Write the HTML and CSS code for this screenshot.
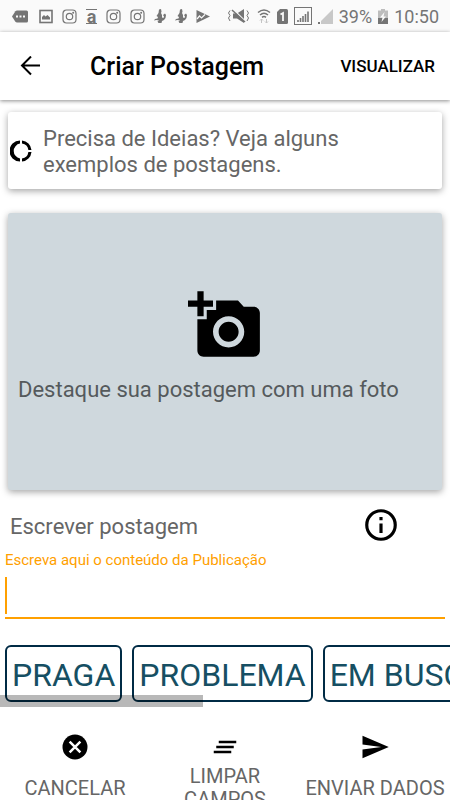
FILE: index.html
```html
<!DOCTYPE html>
<html lang="pt-BR">
<head>
<meta charset="utf-8">
<meta name="viewport" content="width=device-width, initial-scale=1">
<title>Criar Postagem</title>
<link rel="stylesheet" href="styles.css">
</head>
<body>
<svg class="defs" aria-hidden="true">
  <symbol id="camera-outline" viewBox="0 0 15 15">
    <rect x="1" y="1" width="13" height="13" rx="3.5" fill="none" stroke="currentColor" stroke-width="1.2"/>
    <circle cx="7.5" cy="7.5" r="3.2" fill="none" stroke="currentColor" stroke-width="1.2"/>
    <circle cx="11.2" cy="3.8" r="1" fill="currentColor"/>
  </symbol>
  <symbol id="figure" viewBox="0 0 12 15">
    <path fill="currentColor" d="M5 .5 7 0l.5 2.500L7 4l1 2v2.500l1.500.5.500-1.500L9 6l2-1.500L12 6l-.5 3-1.500 2-2 1-.5 2H4.500l-1-1.500L5 11.500 2.500 11 0 11.500 1 10l2.500-.5L4 8 2.500 7 4.500 4z"/>
  </symbol>
</svg>
<div class="app">
  <div class="status">
    <div class="status-icons">
      <svg width="18" height="15" viewBox="0 0 18 15"><path fill="currentColor" d="M5 1.500h9.500q1.500 0 1.500 1.500v9q0 1.500-1.500 1.500H5q-1 0-1.600-.8L0 7.500l3.400-5.200Q4 1.500 5 1.500z"/><path fill="#fafafa" d="M4 6.500h2v2H4zm3.500 0h2v2h-2zm3.500 0h2v2h-2z"/></svg>
      <svg width="14" height="15" viewBox="0 0 14 15"><rect x="1" y="1.500" width="12" height="12" fill="none" stroke="currentColor" stroke-width="1.600"/><path fill="currentColor" d="M3 10.500V8l2-2 1.500 1.500L8.500 6 11 8.500v2z"/></svg>
      <svg width="15" height="15"><use href="#camera-outline"/></svg>
      <span class="letter">a</span>
      <svg width="15" height="15"><use href="#camera-outline"/></svg>
      <svg width="15" height="15"><use href="#camera-outline"/></svg>
      <svg width="12" height="15"><use href="#figure"/></svg>
      <svg width="12" height="15"><use href="#figure"/></svg>
      <svg width="14" height="15" viewBox="0 0 14 15"><path fill="currentColor" d="M.5 1 14 7.500.5 14z"/><path d="m1 10 2.500-3 2 2L9 5.500" fill="none" stroke="#fafafa" stroke-width="1.200"/></svg>
    </div>
    <div class="status-info">
      <svg width="24" height="16" viewBox="0 0 24 16"><path fill="currentColor" d="M6 5.500h4L17 1v14l-7-4.500H6z"/><path d="m6 1 12 12" stroke="#fafafa" stroke-width="1.500"/><path d="m5 2 13 12" stroke="currentColor" stroke-width="1.500"/><path d="M3 2.500 1.500 5 3 7.500 1.500 10 3 13M20 2.500 21.500 5 20 7.500l1.500 2.500L20 13" fill="none" stroke="currentColor"/></svg>
      <svg width="14" height="16" viewBox="0 0 14 16"><path d="M1 4.500q6-5 12 0M3 7q4-3.500 8 0M5 9.300q2-1.600 4 0" fill="none" stroke="currentColor" stroke-width="1.500"/><path d="M4.500 15v-4M3 12.500 4.500 11 6 12.500M9.500 11v4M8 13.500 9.500 15l1.500-1.500" fill="none" stroke="#c4c4c4"/></svg>
      <svg width="11" height="15" viewBox="0 0 11 15"><path fill="currentColor" d="M3 0h6.500Q11 0 11 1.500v12q0 1.500-1.500 1.500h-8Q0 15 0 13.500V3z"/><path d="M3.500 5.500 6 4v8" fill="none" stroke="#fafafa" stroke-width="1.800"/></svg>
      <svg width="18" height="18" viewBox="0 0 18 18"><rect x=".5" y=".5" width="17" height="17" fill="none" stroke="currentColor"/><path d="M4 15v-2M6.500 15v-4M9 15V9M11.500 15V7M14 15V4.500" stroke="currentColor" stroke-width="1.600"/></svg>
      <svg width="15" height="15" viewBox="0 0 15 15"><path fill="#c8c8c8" d="M15 0v15H3v-3z"/><path fill="currentColor" d="M0 13h2v2H0z"/></svg>
      <span>39%</span>
      <svg width="10" height="15" viewBox="0 0 10 15"><path fill="#bdbdbd" d="M3 0h4v1.500h3V9H0V1.500h3z"/><path fill="currentColor" d="M0 9h10v6H0z"/><path fill="#fafafa" d="M6.500 3 2 8.500h2.500L3.500 13 8 7.500H5.500z"/></svg>
      <span>10:50</span>
    </div>
  </div>

  <header class="bar">
    <button class="back" type="button" aria-label="Voltar"><svg width="20" height="20" viewBox="0 0 20 20"><path d="M20 9.500H2M11 .5l-9 9 9 9" fill="none" stroke="#000" stroke-width="2"/></svg></button>
    <h1>Criar Postagem</h1>
    <button class="preview" type="button">VISUALIZAR</button>
  </header>

  <main class="content">
    <a class="card tip" href="#">
      <svg width="22" height="22" viewBox="0 0 22 22"><path fill="#000" d="M10 .5v3.100A7.500 7.500 0 0 0 10 18.400v3.100A10.500 10.500 0 0 1 10 .5zM12 .5A10.500 10.500 0 0 1 21.500 10h-3.100A7.500 7.500 0 0 0 12 3.600zM18.400 12h3.100A10.500 10.500 0 0 1 12 21.500v-3.100A7.500 7.500 0 0 0 18.400 12z"/></svg>
      <span>Precisa de Ideias? Veja alguns exemplos de postagens.</span>
    </a>

    <button class="card photo" type="button">
      <svg width="75" height="75" viewBox="0 0 24 24"><path fill="#000" d="M3 4V1h2v3h3v2H5v3H3V6H0V4h3zm3 6V7h3V4h7l1.830 2H21c1.100 0 2 .9 2 2v12c0 1.100-.9 2-2 2H5c-1.100 0-2-.9-2-2V10h3zm7 9c2.760 0 5-2.240 5-5s-2.240-5-5-5-5 2.240-5 5 2.240 5 5 5zm-3.200-5c0 1.770 1.430 3.200 3.200 3.200s3.200-1.430 3.200-3.200-1.430-3.200-3.200-3.200-3.200 1.430-3.200 3.200z"/></svg>
      <span>Destaque sua postagem com uma foto</span>
    </button>

    <section class="write">
      <div class="write-head">
        <h2>Escrever postagem</h2>
        <button class="info" type="button" aria-label="Informações"><svg width="38" height="38" viewBox="0 0 24 24"><path fill="#000" d="M11 7h2v2h-2zm0 4h2v6h-2zm1-9a10 10 0 1 0 0 20 10 10 0 0 0 0-20zm0 18a8 8 0 1 1 0-16 8 8 0 0 1 0 16z"/></svg></button>
      </div>
      <label for="post">Escreva aqui o conteúdo da Publicação</label>
      <div class="field"><input id="post" type="text"></div>
    </section>

    <div class="tags">
      <button type="button">PRAGA</button>
      <button type="button">PROBLEMA</button>
      <button type="button">EM BUSCA</button>
      <div class="scroll-thumb"></div>
    </div>
  </main>

  <nav class="actions">
    <button type="button">
      <svg width="30" height="30" viewBox="0 0 24 24"><circle cx="12" cy="12" r="10"/><path d="m7.700 7.700 8.600 8.600m0-8.600-8.600 8.600" stroke="#fff" stroke-width="2"/></svg>
      <span>CANCELAR</span>
    </button>
    <button type="button">
      <svg width="30" height="30" viewBox="0 0 24 24"><path d="M5 13h14v-2H5zm-2 4h14v-2H3zM7 7v2h14V7z"/></svg>
      <span>LIMPAR CAMPOS</span>
    </button>
    <button type="button">
      <svg width="30" height="30" viewBox="0 0 24 24"><path d="M2 21 23 12 2 3v7l15 2-15 2z"/></svg>
      <span>ENVIAR DADOS</span>
    </button>
  </nav>
</div>
</body>
</html>
```
FILE: styles.css
```css
* { box-sizing: border-box; }

body {
  margin: 0;
  background: #fff;
  font-family: Roboto, "Liberation Sans", sans-serif;
  color: #666;
}

button {
  padding: 0;
  border: 0;
  background: none;
  font: inherit;
  color: inherit;
}

svg { display: block; flex: none; }
h1, h2 { margin: 0; }
.defs { position: absolute; width: 0; height: 0; }

.app {
  display: flex;
  flex-direction: column;
  height: 100vh;
  overflow: hidden;
}

.status {
  display: flex;
  flex: none;
  justify-content: space-between;
  align-items: center;
  height: 32px;
  padding: 0 11px 0 12px;
  background: #fafafa;
  color: #757575;
  font-size: 18px;
}
.status-icons { display: flex; align-items: center; gap: 9px; }
.status-info { display: flex; align-items: center; gap: 6px; }
.letter {
  width: 11px;
  border: solid #757575;
  border-width: 1px 0;
  font-size: 18px;
  font-weight: 700;
  line-height: 13px;
  text-align: center;
}

.bar {
  position: relative;
  display: flex;
  flex: none;
  align-items: center;
  height: 68px;
  padding: 0 15px 0 20px;
  background: #fff;
  box-shadow: 0 1px 4px rgba(0, 0, 0, .45);
  color: #000;
}
.bar h1 {
  flex: 1;
  margin-left: 50px;
  font-size: 25px;
  font-weight: 500;
}
.preview { font-size: 17px; font-weight: 500; }

.content { flex: none; padding-top: 12px; }

.card {
  display: flex;
  margin: 0 8px;
  border-radius: 3px;
  box-shadow: 0 2px 7px rgba(0, 0, 0, .36);
  font-size: 22px;
}
.tip {
  align-items: center;
  gap: 11px;
  padding: 14px 60px 11px 2px;
  color: #666;
  line-height: 26px;
  text-decoration: none;
}
.tip svg { margin-bottom: 3px; }
.photo {
  flex-direction: column;
  align-items: center;
  width: calc(100% - 16px);
  height: 277px;
  margin-top: 24px;
  padding: 75px 10px 0;
  background: #cfd8dd;
  color: #555a5c;
}
.photo span { align-self: flex-start; margin-top: 13px; line-height: 28px; }

.write { padding: 16px 5px 0; }
.write-head {
  display: flex;
  justify-content: space-between;
  align-items: center;
  padding: 0 45px 0 5px;
}
.write h2 { padding-top: 3px; font-size: 22px; font-weight: 400; }
.write label {
  display: block;
  margin-top: 6px;
  color: #ffa000;
  font-size: 15px;
  line-height: 20px;
}
.field {
  display: flex;
  margin-top: 7px;
  padding-bottom: 3px;
  border-bottom: 2px solid #ffa000;
}
.field input {
  width: 100%;
  height: 37px;
  padding: 0 4px;
  border: 0;
  border-left: 2px solid #ffa000;
  outline: 0;
  background: none;
  caret-color: #ffa000;
  font: inherit;
  font-size: 22px;
}

.tags {
  position: relative;
  display: flex;
  gap: 10px;
  margin-top: 26px;
  padding: 0 5px 5px;
  overflow: hidden;
}
.tags button {
  flex: none;
  height: 57px;
  padding: 3px 5px 0;
  border: 2px solid #002b45;
  border-radius: 6px;
  color: #164f63;
  font-size: 32px;
  line-height: 40px;
  white-space: nowrap;
}
.scroll-thumb {
  position: absolute;
  left: 0;
  bottom: 0;
  width: 45%;
  height: 12px;
  background: rgba(0, 0, 0, .28);
}

.actions {
  display: grid;
  flex: none;
  grid-template-columns: repeat(3, 1fr);
  height: 110px;
  padding-top: 25px;
}
.actions button {
  display: flex;
  flex-direction: column;
  align-items: center;
  font-size: 20px;
  line-height: 23px;
}
.actions span {
  display: flex;
  align-items: center;
  min-height: 52px;
  padding: 0 4px;
}
```
